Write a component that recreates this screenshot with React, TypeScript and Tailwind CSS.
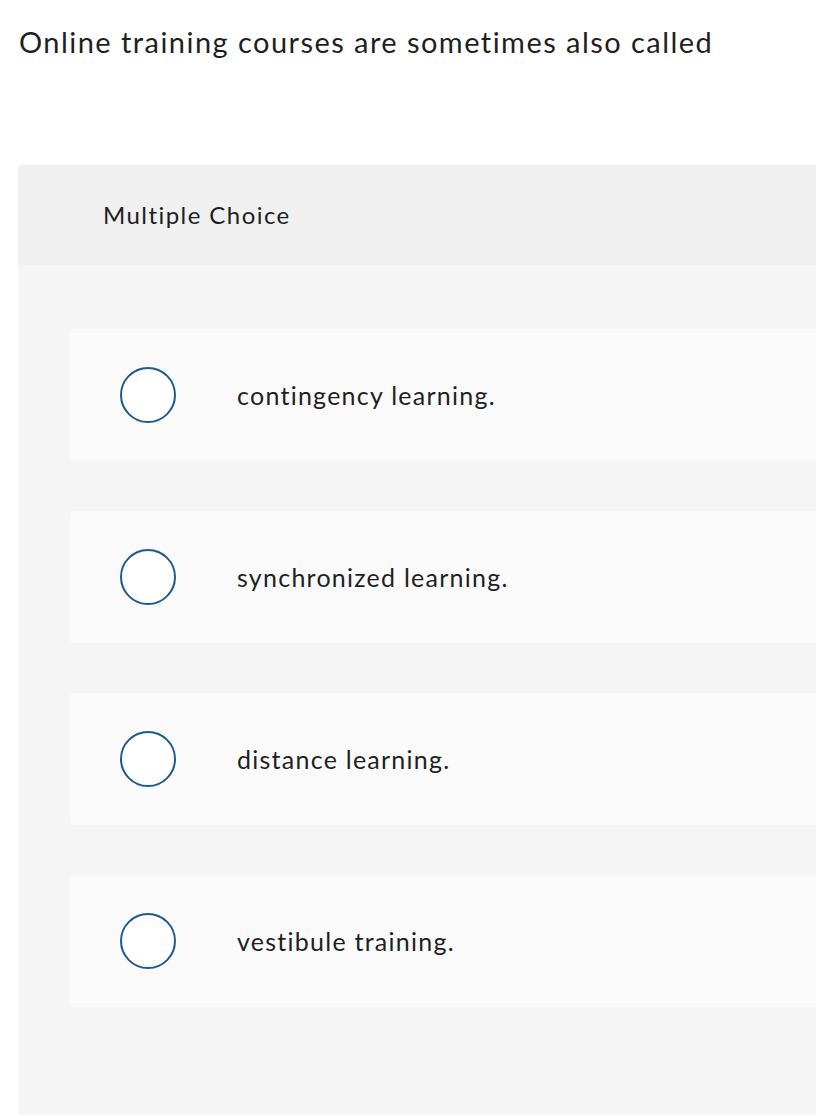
const options = [
  'contingency learning.',
  'synchronized learning.',
  'distance learning.',
  'vestibule training.',
];

export default function App() {
  return (
    <div className="w-[816px] h-[1116px] overflow-hidden bg-white text-[#1f1f1f] font-['Lato','Open_Sans',sans-serif]">
      <h1 className="pl-[19px] pt-[24px] text-[29px] leading-[36px] font-normal tracking-[0.05em]">
        Online training courses are sometimes also called
      </h1>

      <section className="ml-[18px] mt-[105px] w-[860px] rounded-[4px] overflow-hidden bg-[#f5f5f5]">
        <div className="h-[100px] bg-[#f0f0f0] flex items-center pl-[85px]">
          <span className="text-[24px] leading-[30px] tracking-[0.06em]">Multiple Choice</span>
        </div>

        <div className="pt-[64px] pb-[108px] pl-[52px] flex flex-col gap-[50px]">
          {options.map(o => (
            <label key={o} className="h-[132px] bg-[#fafafa] rounded-[4px] flex items-center cursor-pointer">
              <span className="ml-[50px] w-[56px] h-[56px] rounded-full border-2 border-[#1e5a8e] bg-white shrink-0" />
              <span className="ml-[61px] text-[25px] leading-[30px] tracking-[0.05em]">{o}</span>
            </label>
          ))}
        </div>
      </section>
    </div>
  );
}
